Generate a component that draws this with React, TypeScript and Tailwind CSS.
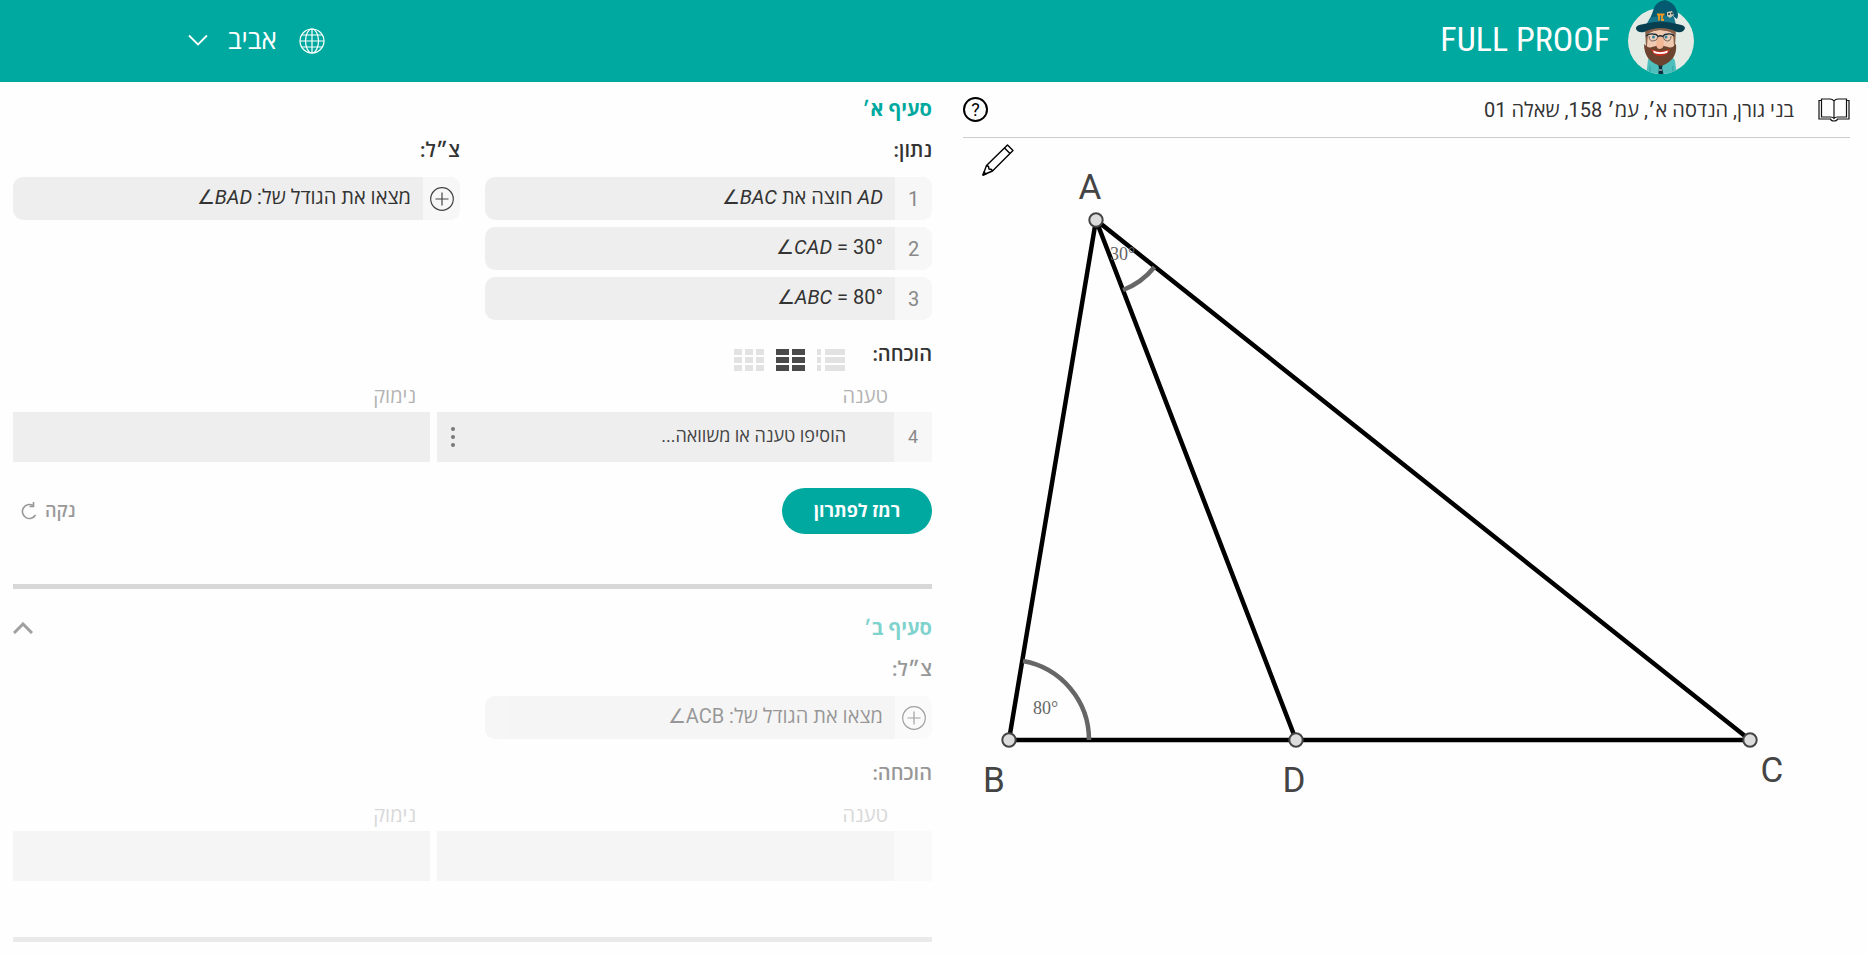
import React from "react";

const WizardLogo = () => (
  <svg width="66" height="74" viewBox="0 0 66 74" aria-hidden="true">
    <defs>
      <clipPath id="badge">
        <circle cx="33" cy="41" r="33" />
      </clipPath>
    </defs>
    <circle cx="33" cy="41" r="33" fill="#e3ebe4" />
    <g clipPath="url(#badge)">
      <path d="M18 76 20 60Q21 56 26 57H41Q46 57 47 61L49 76Z" fill="#4fbfbd" />
      <path d="M22 76V66M45 76V66" stroke="#2ba39f" strokeWidth="1" />
      <path d="M30 64h5l-1 4 2 8h-6l1-8z" fill="#0b2e3c" />
      <path d="M31 70h3" stroke="#e3ebe4" strokeWidth="1" />
    </g>
    {/* hair, face and beard */}
    <path d="M17 28Q32 24 48 28L47 48H18Z" fill="#8a6148" />
    <path d="M20 33Q32 27 45 33L46 46Q42 54 32 55Q22 54 19 46Z" fill="#efc9b0" />
    <path d="M20 34Q28 28 38 31Q44 31 45 35L44 27H20Z" fill="#8a6148" />
    <path
      d="M16 44Q20 49 24 47Q32 44 40 47Q44 49 48 44Q49 52 45 58Q40 64 33 66Q25 64 20 58Q16 52 16 44Z"
      fill="#6b432f"
    />
    <path d="M23 49Q32 53 42 49Q40 56 32 56Q25 56 23 49Z" fill="#c4301f" />
    <path d="M25 50.500Q32 54 40 50.500L39 53Q32 55 26 53Z" fill="#fff" />
    <path d="M30 37Q26 47 31 49Q38 49 35 37Z" fill="#f2b795" />
    <circle cx="25" cy="37" r="4" fill="#e8cdbb" />
    <circle cx="39" cy="37" r="4" fill="#e8cdbb" />
    <path
      d="M18 36Q21 33.500 25 34Q29 34 30 36.500Q32.500 35 35 36.500Q36 34 40 34Q44 33.500 46 36"
      stroke="#1c2b33"
      strokeWidth="1.300"
      fill="none"
    />
    <path d="M21 36Q21 41 25 41Q29 41 30 37M35 37Q36 41 39.500 41Q43 41 43 36" stroke="#5a4a48" strokeWidth="0.800" fill="none" />
    <circle cx="25.500" cy="37" r="1.500" fill="#37879b" />
    <circle cx="38" cy="37" r="1.500" fill="#37879b" />
    {/* hat */}
    <path d="M18 27Q24 15 26 8Q29 1 37 0Q46 2 49 11Q51 15 49 19L45 16L48 27Z" fill="#045a70" />
    <path d="M22 18Q33 14 46 17L48 25Q33 21 18 25Z" fill="#16758a" />
    <path d="M8 29Q7 25 16 24Q33 19 49 24Q57 25 57 28Q56 33 49 32Q33 24 16 32Q10 33 8 29Z" fill="#073f50" />
    <path d="M29 14.500h7.500M31 14.500v6M34 14.500v5.500h2" stroke="#f59a23" strokeWidth="1.800" fill="none" />
    <path d="M39 12l5-1 2 4-4 3-3-2z" fill="#c9c9b8" />
    <circle cx="41" cy="14" r="1" fill="#23323a" />
    <circle cx="44" cy="13.500" r="1" fill="#23323a" />
  </svg>
);

const GlobeIcon = () => (
  <svg width="26" height="26" viewBox="0 0 26 26" fill="none" stroke="currentColor" strokeWidth="1.200" aria-hidden="true">
    <circle cx="13" cy="13" r="12" />
    <ellipse cx="13" cy="13" rx="6.500" ry="12" />
    <path d="M13 1v24M1 13h24M3 7h20M3 19h20" />
  </svg>
);

const BookIcon = () => (
  <svg width="32" height="24" viewBox="0 0 32 24" fill="none" stroke="#111" strokeWidth="1.200" aria-hidden="true">
    <path d="M16 3Q14.500 1 12 1H3.500V19H12.500Q15 19 16 20.500Q17 19 19.500 19H28.500V1H20Q17.500 1 16 3ZM16 3V20" />
    <path d="M3 2.500H1V21H12.500Q13 23 16 23Q19 23 19.500 21H31V2.500H29" />
  </svg>
);

const PencilIcon = () => (
  <svg width="32" height="32" viewBox="0 0 32 32" fill="none" stroke="#000" strokeWidth="1.400" strokeLinejoin="round" aria-hidden="true">
    <path d="M1 31 4.500 21.500 25.500 1 31 6.500 10.500 27Z" />
    <path d="M4.500 21.500 6.500 22.500 7 25 9.500 25.500 10.500 27M22.500 4 28 9.500M1 31l3-1-2-2z" />
  </svg>
);

const PlusIcon = () => (
  <svg width="24" height="24" viewBox="0 0 24 24" fill="none" stroke="#444" strokeWidth="1.200" aria-hidden="true">
    <circle cx="12" cy="12" r="11.300" />
    <path d="M12 5.500v13M5.500 12h13" />
  </svg>
);

const layouts = [
  { name: "list", columns: [[0, 4], [8, 20]], fill: "#e2e2e2", width: 28 },
  { name: "two", columns: [[0, 13], [16, 13]], fill: "#4a4a4a", width: 29 },
  { name: "three", columns: [[0, 8], [11, 8], [22, 8]], fill: "#e2e2e2", width: 30 },
];

const givens = [
  <>
    <i>AD</i> חוצה את <bdi dir="ltr">∠<i>BAC</i></bdi>
  </>,
  <bdi dir="ltr">∠<i>CAD</i> = 30°</bdi>,
  <bdi dir="ltr">∠<i>ABC</i> = 80°</bdi>,
];

const Row = ({ mark, children }: { mark: React.ReactNode; children: React.ReactNode }) => (
  <div className="flex h-[43px] overflow-hidden rounded-[10px] bg-[#eee] text-xl text-[#333]">
    <div className="flex w-[37px] shrink-0 items-center justify-center bg-[#f7f7f7] text-[#888]">
      {mark}
    </div>
    <div className="flex-1 px-3 leading-[40px]">{children}</div>
  </div>
);

const Heading = ({ children }: { children: React.ReactNode }) => (
  <h3 className="text-xl leading-[30px] font-semibold text-[#333]">{children}</h3>
);

const ProofTable = ({ id, line, placeholder }: { id: string; line?: number; placeholder?: string }) => (
  <div className="mt-[13px] grid grid-cols-[495fr_417fr] gap-x-[7px]">
    <label htmlFor={id + "-claim"} className="pr-11 pb-0.5 text-xl leading-7 text-[#b3b3b3]">
      טענה
    </label>
    <label htmlFor={id + "-reason"} className="pr-3.5 pb-0.5 text-xl leading-7 text-[#b3b3b3]">
      נימוק
    </label>
    <div className="flex h-[50px] bg-[#eee]">
      <div className="flex w-[38px] shrink-0 items-center justify-center bg-[#f7f7f7] text-lg text-[#888]">
        {line}
      </div>
      <input
        id={id + "-claim"}
        placeholder={placeholder}
        className="min-w-0 flex-1 bg-transparent pr-12 pb-0.5 text-lg text-[#444] outline-none placeholder:text-[#444]"
      />
      {line && (
        <button aria-label="אפשרויות" className="flex w-8 items-center justify-center">
          <svg width="4" height="22" viewBox="0 0 4 22" fill="#777" aria-hidden="true">
            <circle cx="2" cy="3" r="2" />
            <circle cx="2" cy="11" r="2" />
            <circle cx="2" cy="19" r="2" />
          </svg>
        </button>
      )}
    </div>
    <input id={id + "-reason"} className="h-[50px] min-w-0 bg-[#eee] px-3 text-lg outline-none" />
  </div>
);

const points = [
  { name: "A", x: 133, y: 82, labelX: 127, labelY: 61 },
  { name: "B", x: 46, y: 602, labelX: 31, labelY: 654 },
  { name: "D", x: 333, y: 602, labelX: 331, labelY: 654 },
  { name: "C", x: 787, y: 602, labelX: 809, labelY: 644 },
];

const Diagram = () => (
  <svg viewBox="0 0 887 700" className="block h-auto w-full" direction="ltr">
    <path d="M133 82 46 602H787ZM133 82 333 602" fill="none" stroke="#000" strokeWidth="4.500" />
    <path d="M60 523A80 80 0 0 1 126 602M191.500 129A75 75 0 0 1 160 152" fill="none" stroke="#666" strokeWidth="4.500" />
    <g fontFamily="Liberation Serif, serif" fontSize="18" fill="#666">
      <text x="147" y="122">30°</text>
      <text x="70" y="576">80°</text>
    </g>
    {points.map((p) => (
      <g key={p.name}>
        <circle cx={p.x} cy={p.y} r="6.700" fill="#dcdcdc" stroke="#444" strokeWidth="2" />
        <text x={p.labelX} y={p.labelY} textAnchor="middle" fontFamily="Roboto, sans-serif" fontSize="35" fill="#444">
          {p.name}
        </text>
      </g>
    ))}
  </svg>
);

const App = () => {
  return (
    <div dir="rtl" className="min-h-screen bg-[#fefefe] font-['Roboto','Open_Sans',sans-serif] text-[#333]">
      {/* Header */}
      <header className="flex h-[82px] items-center justify-between bg-[#00a99f] pr-[174px] pl-[188px] text-white">
        <a href="#" className="flex items-center gap-[18px] self-start">
          <WizardLogo />
          <span dir="ltr" className="pt-1 font-['Roboto_Condensed','Roboto',sans-serif] text-[34px] leading-10">
            FULL PROOF
          </span>
        </a>
        <div className="flex items-center gap-[22px]">
          <button aria-label="שפה">
            <GlobeIcon />
          </button>
          <button className="flex items-center gap-5 pb-0.5 text-[26px]">
            אביב
            <svg width="20" height="12" viewBox="0 0 20 12" fill="none" stroke="currentColor" strokeWidth="1.800" aria-hidden="true">
              <path d="M1 1.500 10 10.500 19 1.500" />
            </svg>
          </button>
        </div>
      </header>

      <main className="grid grid-cols-[887fr_919fr] gap-[31px] pr-[18px] pl-[13px]">
        {/* Question and drawing */}
        <section>
          <div className="flex h-14 items-center gap-6 border-b border-[#ccc]">
            <BookIcon />
            <h1 className="flex-1 text-xl">בני גורן, הנדסה א׳, עמ׳ 158, שאלה 01</h1>
            <button
              aria-label="עזרה"
              className="flex h-[25px] w-[25px] items-center justify-center rounded-full border-2 border-black text-lg leading-none text-black"
            >
              ?
            </button>
          </div>
          <div className="relative">
            <button aria-label="ציור" className="absolute top-[6px] left-[19px]">
              <PencilIcon />
            </button>
            <Diagram />
          </div>
        </section>

        {/* Proof */}
        <section className="pt-3">
          <h2 className="text-xl leading-[30px] font-bold text-[#00a99f]">סעיף א׳</h2>
          <div className="mt-[11px] grid grid-cols-2 gap-x-[25px]">
            <div>
              <Heading>נתון:</Heading>
              <ol className="mt-3 flex flex-col gap-[7px]">
                {givens.map((given, idx) => (
                  <li key={idx}>
                    <Row mark={idx + 1}>{given}</Row>
                  </li>
                ))}
              </ol>
            </div>
            <div>
              <Heading>צ״ל:</Heading>
              <div className="mt-3">
                <Row mark={<PlusIcon />}>
                  מצאו את הגודל של: <bdi dir="ltr">∠<i>BAD</i></bdi>
                </Row>
              </div>
            </div>
          </div>

          <div className="mt-[19px] flex h-[30px]">
            <div className="w-[87px]">
              <Heading>הוכחה:</Heading>
            </div>
            <div className="flex gap-3 pt-[10px]">
              {layouts.map((layout) => (
                <button key={layout.name} aria-label={layout.name} className="h-[22px]">
                  <svg width={layout.width} height="22" fill={layout.fill} aria-hidden="true">
                    {layout.columns.map(([x, w]) =>
                      [0, 8, 16].map((y) => (
                        <rect key={x + "-" + y} x={x} y={y} width={w} height="6" />
                      ))
                    )}
                  </svg>
                </button>
              ))}
            </div>
          </div>
          <ProofTable id="a" line={4} placeholder="הוסיפו טענה או משוואה..." />

          <div className="mt-[26px] flex items-center justify-between">
            <button className="h-[46px] w-[150px] rounded-full bg-[#00a99f] text-lg font-bold text-white">
              רמז לפתרון
            </button>
            <button className="flex items-center gap-2 pl-2 text-lg font-semibold text-[#999]">
              נקה
              <svg width="16" height="18" viewBox="0 0 16 18" fill="none" stroke="#999" strokeWidth="1.600" aria-hidden="true">
                <path d="M14.500 13A7 7 0 1 1 12 3.500" />
                <path d="M12.500 0v4.500H8.500" />
              </svg>
            </button>
          </div>
          <hr className="mt-[50px] border-t-[5px] border-[#d8d8d8]" />

          <div className="pt-6 opacity-50">
            <div className="flex items-center justify-between">
              <h2 className="text-xl leading-[30px] font-bold text-[#00a99f]">סעיף ב׳</h2>
              <button aria-label="סגירה">
                <svg width="20" height="12" viewBox="0 0 20 12" fill="none" stroke="#444" strokeWidth="3" aria-hidden="true">
                  <path d="M1 11 10 2 19 11" />
                </svg>
              </button>
            </div>
            <div className="mt-[11px] grid grid-cols-2 gap-x-[25px]">
              <div>
                <Heading>צ״ל:</Heading>
                <div className="mt-3">
                  <Row mark={<PlusIcon />}>
                    מצאו את הגודל של: <bdi dir="ltr">∠ACB</bdi>
                  </Row>
                </div>
              </div>
            </div>
            <div className="mt-[19px]">
              <Heading>הוכחה:</Heading>
            </div>
            <ProofTable id="b" />
            <hr className="mt-14 border-t-[5px] border-[#d8d8d8]" />
          </div>
        </section>
      </main>
    </div>
  );
};

export default App;
